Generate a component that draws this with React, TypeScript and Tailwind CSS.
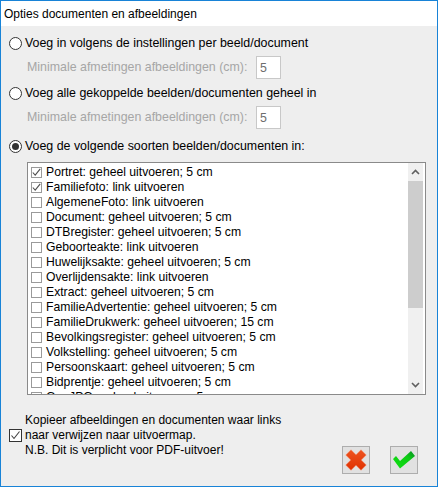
import React from 'react';

const items = [
  { label: 'Portret: geheel uitvoeren; 5 cm', checked: true },
  { label: 'Familiefoto: link uitvoeren', checked: true },
  { label: 'AlgemeneFoto: link uitvoeren' },
  { label: 'Document: geheel uitvoeren; 5 cm' },
  { label: 'DTBregister: geheel uitvoeren; 5 cm' },
  { label: 'Geboorteakte: link uitvoeren' },
  { label: 'Huwelijksakte: geheel uitvoeren; 5 cm' },
  { label: 'Overlijdensakte: link uitvoeren' },
  { label: 'Extract: geheel uitvoeren; 5 cm' },
  { label: 'FamilieAdvertentie: geheel uitvoeren; 5 cm' },
  { label: 'FamilieDrukwerk: geheel uitvoeren; 15 cm' },
  { label: 'Bevolkingsregister: geheel uitvoeren; 5 cm' },
  { label: 'Volkstelling: geheel uitvoeren; 5 cm' },
  { label: 'Persoonskaart: geheel uitvoeren; 5 cm' },
  { label: 'Bidprentje: geheel uitvoeren; 5 cm' },
  { label: 'GeoJPG: geheel uitvoeren; 5 cm' },
];

function Radio({ selected }: { selected?: boolean }) {
  return (
    <span className="w-[13px] h-[13px] rounded-full border border-[#333333] bg-white flex items-center justify-center shrink-0">
      {selected && <span className="w-[7px] h-[7px] rounded-full bg-[#333333]" />}
    </span>
  );
}

function ListCheck({ checked }: { checked?: boolean }) {
  return (
    <span className="w-[11px] h-[11px] border border-[#9a9a9a] bg-white flex items-center justify-center shrink-0">
      {checked && (
        <svg width="9" height="9" viewBox="0 0 9 9" fill="none">
          <path d="M0.8 4.5 L3.2 7.2 L8.2 0.8" stroke="#505050" strokeWidth="1.1" />
        </svg>
      )}
    </span>
  );
}

function SizeRow() {
  return (
    <div className="flex items-center h-[23px] mt-[4px] pl-[26px] text-[#a6a6a6]">
      <span className="w-[229px] whitespace-nowrap">Minimale afmetingen afbeeldingen (cm):</span>
      <span className="w-[25px] h-[23px] border border-[#c8c8c8] bg-white text-[#6d6d6d] pl-[3px] leading-[22px]">5</span>
    </div>
  );
}

export default function App() {
  return (
    <div className="w-[438px] h-[487px] bg-[#eeeeee] border border-[#1883d7] flex flex-col text-[12.4px] text-black font-['Liberation_Sans',sans-serif]">
      <div className="h-[25px] bg-white flex items-center pl-[3px] shrink-0 text-[12px]">
        Opties documenten en afbeeldingen
      </div>
      <div className="flex items-center gap-[3px] pl-[8px] mt-[8px] h-[18px]">
        <Radio />
        <span>Voeg in volgens de instellingen per beeld/document</span>
      </div>
      <SizeRow />
      <div className="flex items-center gap-[3px] pl-[8px] mt-[5px] h-[18px]">
        <Radio />
        <span>Voeg alle gekoppelde beelden/documenten geheel in</span>
      </div>
      <SizeRow />
      <div className="flex items-center gap-[3px] pl-[8px] mt-[8px] h-[18px]">
        <Radio selected />
        <span>Voeg de volgende soorten beelden/documenten in:</span>
      </div>
      <div className="mt-[7px] ml-[26px] w-[399px] h-[233px] border border-[#8a8a8a] bg-white flex shrink-0 overflow-hidden">
        <div className="flex-1 overflow-hidden pt-[2px] text-[12.2px]">
          {items.map((item) => (
            <div key={item.label} className="flex items-center gap-[4px] h-[15px] pl-[3px] whitespace-nowrap">
              <ListCheck checked={item.checked} />
              <span>{item.label}</span>
            </div>
          ))}
        </div>
        <div className="w-[15px] mr-[2px] flex flex-col bg-[#f0f0f0] shrink-0">
          <div className="h-[18px] flex items-center justify-center">
            <svg width="9" height="6" viewBox="0 0 9 6" fill="none"><path d="M1 5 L4.5 1.5 L8 5" stroke="#606060" strokeWidth="1.6" /></svg>
          </div>
          <div className="h-[127px] bg-[#cdcdcd]" />
          <div className="mt-auto h-[18px] flex items-center justify-center">
            <svg width="9" height="6" viewBox="0 0 9 6" fill="none"><path d="M1 1 L4.5 4.5 L8 1" stroke="#606060" strokeWidth="1.6" /></svg>
          </div>
        </div>
      </div>
      <div className="flex mt-[18px] pl-[8px] pr-[19px]">
        <div className="flex items-center gap-[3px] h-[45px] text-[12px]">
          <span className="w-[13px] h-[13px] border border-[#333333] bg-white flex items-center justify-center shrink-0">
            <svg width="11" height="11" viewBox="0 0 11 11" fill="none">
              <path d="M1.5 5.5 L4 8.5 L9.5 1.5" stroke="#404040" strokeWidth="1.1" />
            </svg>
          </span>
          <div className="leading-[15px] whitespace-nowrap">
            <div>Kopieer afbeeldingen en documenten waar links</div>
            <div>naar verwijzen naar uitvoermap.</div>
            <div>N.B. Dit is verplicht voor PDF-uitvoer!</div>
          </div>
        </div>
        <div className="ml-auto flex gap-[20px] mt-[33px]">
          <button className="w-[28px] h-[28px] border border-[#adadad] bg-[#e1e1e1] flex items-center justify-center">
            <svg width="22" height="22" viewBox="0 0 22 22">
              <defs>
                <linearGradient id="xFill" x1="0" y1="0" x2="0" y2="1">
                  <stop offset="0" stopColor="#ee5420" />
                  <stop offset="1" stopColor="#e03000" />
                </linearGradient>
              </defs>
              <path d="M6 0.5 L11 5.5 L16 0.5 L21.5 6 L16.5 11 L21.5 16 L16 21.5 L11 16.5 L6 21.5 L0.5 16 L5.5 11 L0.5 6 Z" fill="url(#xFill)" stroke="#f7e2da" strokeWidth="0.5" strokeLinejoin="round" />
            </svg>
          </button>
          <button className="w-[28px] h-[28px] border border-[#adadad] bg-[#e1e1e1] flex items-center justify-center">
            <svg width="24" height="22" viewBox="0 0 24 22">
              <defs>
                <linearGradient id="okFill" x1="0" y1="1" x2="1" y2="0">
                  <stop offset="0" stopColor="#10e010" />
                  <stop offset="0.65" stopColor="#0ccc14" />
                  <stop offset="1" stopColor="#0a8c28" />
                </linearGradient>
              </defs>
              <path d="M1 10 L4 7 L8 12 L19 2 L23 7 L8 19.5 Z" fill="url(#okFill)" strokeLinejoin="round" />
            </svg>
          </button>
        </div>
      </div>
    </div>
  );
}
